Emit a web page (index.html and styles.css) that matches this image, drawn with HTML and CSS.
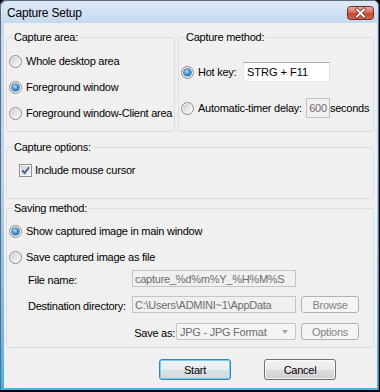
FILE: index.html
```html
<!DOCTYPE html>
<html>
<head>
<meta charset="utf-8">
<title>Capture Setup</title>
<link rel="stylesheet" href="styles.css">
</head>
<body>
<div class="window">
  <div class="titlebar">
    <span class="title">Capture Setup</span>
    <span class="close">
      <svg width="27" height="14" viewBox="0 0 27 14">
        <defs>
          <linearGradient id="cbg" x1="0" y1="0" x2="0" y2="1">
            <stop offset="0" stop-color="#eab0a4"/>
            <stop offset="0.45" stop-color="#d7705c"/>
            <stop offset="0.55" stop-color="#c9462e"/>
            <stop offset="1" stop-color="#d3684f"/>
          </linearGradient>
        </defs>
        <rect x="0.5" y="0.5" width="26" height="13" rx="3" fill="url(#cbg)" stroke="#6f2d22"/>
        <path d="M10 3.5 L17 10.5 M17 3.5 L10 10.5" stroke="#7a3a2f" stroke-width="3.4" stroke-linecap="square"/>
        <path d="M10 3.5 L17 10.5 M17 3.5 L10 10.5" stroke="#ffffff" stroke-width="1.8" stroke-linecap="square"/>
      </svg>
    </span>
  </div>
  <div class="frame">
    <div class="client">
      <div class="top-row">
        <fieldset class="group area">
          <legend>Capture area:</legend>
          <div class="body">
            <div class="opt"><span class="radio"></span><span>Whole desktop area</span></div>
            <div class="opt"><span class="radio"><span class="dot"></span></span><span>Foreground window</span></div>
            <div class="opt"><span class="radio"></span><span>Foreground window-Client area</span></div>
          </div>
        </fieldset>
        <fieldset class="group method">
          <legend>Capture method:</legend>
          <div class="body">
            <div class="opt hot"><span class="radio"><span class="dot"></span></span><span class="lbl-hot">Hot key:</span><span class="edit hotkey">STRG + F11</span></div>
            <div class="opt timer"><span class="radio"></span><span class="lbl-timer">Automatic-timer delay:</span><span class="edit dis delay">600</span><span>seconds</span></div>
          </div>
        </fieldset>
      </div>

      <fieldset class="group options">
        <legend>Capture options:</legend>
        <div class="body">
          <div class="check-row">
            <svg class="checkbox" width="13" height="13" viewBox="0 0 13 13">
              <defs>
                <linearGradient id="chk" x1="0" y1="0" x2="1" y2="1">
                  <stop offset="0" stop-color="#c9cdd2"/>
                  <stop offset="1" stop-color="#f3f4f6"/>
                </linearGradient>
              </defs>
              <rect x="0.5" y="0.5" width="12" height="12" fill="#f6f6f6" stroke="#8e8f8f"/>
              <rect x="2" y="2" width="9" height="9" fill="url(#chk)"/>
              <path d="M3.3 6.4 L5.6 9 L10.2 3.2" fill="none" stroke="#3f5f99" stroke-width="1.8"/>
            </svg>
            <span>Include mouse cursor</span>
          </div>
        </div>
      </fieldset>

      <fieldset class="group saving">
        <legend>Saving method:</legend>
        <div class="body">
          <div class="opt"><span class="radio"><span class="dot"></span></span><span>Show captured image in main window</span></div>
          <div class="opt"><span class="radio"></span><span>Save captured image as file</span></div>
          <div class="fields">
            <div class="frow">
              <span class="flabel">File name:</span>
              <span class="edit dis field">capture_%d%m%Y_%H%M%S</span>
            </div>
            <div class="frow dir">
              <span class="flabel">Destination directory:</span>
              <span class="edit dis field">C:\Users\ADMINI~1\AppData</span>
              <span class="fbtn">Browse</span>
            </div>
            <div class="frow save">
              <span class="flabel"></span>
              <span class="saveas">
                <span class="saveas-lbl">Save as:</span>
                <span class="select"><span>JPG - JPG Format</span><span class="arrow"></span></span>
              </span>
              <span class="fbtn">Options</span>
            </div>
          </div>
        </div>
      </fieldset>

      <div class="buttons">
        <span class="btn default">Start</span>
        <span class="btn">Cancel</span>
      </div>
    </div>
  </div>
</div>
</body>
</html>
```

FILE: styles.css
```css
html, body {
  margin: 0;
  padding: 0;
}
body {
  background: #000;
  width: 380px;
  height: 392px;
  overflow: hidden;
  font-family: "Liberation Sans", Arial, sans-serif;
  font-size: 11px;
  letter-spacing: -0.25px;
  color: #000;
}
.window {
  width: 379px;
  height: 390px;
  display: flex;
  flex-direction: column;
  border-radius: 6px 6px 0 0;
  background: linear-gradient(#dfeaf7 0, #c7d9ef 22px, #bad1eb 45%, #74b6e2 85%, #3fb6e9 100%);
  box-shadow: inset 1px 1px 0 #5d6c7e, inset -1px 0 0 #4a7ea6;
  overflow: hidden;
}
.titlebar {
  height: 23px;
  box-sizing: border-box;
  padding: 2px 5px 0 7px;
  display: flex;
  align-items: center;
  justify-content: space-between;
  flex: none;
}
.title {
  font-size: 12px;
  letter-spacing: -0.2px;
  color: #000;
}
.close {
  display: flex;
  width: 27px;
  height: 14px;
  margin-top: 1px;
}
.frame {
  flex: 1;
  display: flex;
  padding: 0 2px 2px 4px;
}
.client {
  flex: 1;
  background: #f0f0f0;
  padding: 8px 3px 8px 2px;
  display: flex;
  flex-direction: column;
}
.top-row {
  display: flex;
  gap: 3px;
}
.group {
  margin: 0;
  padding: 0;
  border: 1px solid #d5dfe5;
  border-radius: 3px;
  min-width: 0;
  box-sizing: border-box;
}
.group legend {
  margin-left: 6px;
  padding: 0 1px;
  line-height: 13px;
}
.area {
  width: 169px;
  flex: none;
}
.method {
  flex: 1;
}
.area .body {
  padding: 4px 0 5px 2px;
}
.opt {
  display: flex;
  align-items: center;
  height: 26px;
  line-height: 13px;
  white-space: nowrap;
}
.radio {
  width: 13px;
  height: 13px;
  box-sizing: border-box;
  border-radius: 50%;
  border: 1px solid #8c8c8c;
  background: linear-gradient(135deg, #c4c4c4 0, #e6e6e6 50%, #fbfbfb 100%);
  box-shadow: inset 0 0 0 1px #f3f3f3;
  display: flex;
  align-items: center;
  justify-content: center;
  flex: none;
  margin-right: 4px;
}
.dot {
  width: 7px;
  height: 7px;
  border-radius: 50%;
  background: radial-gradient(circle at 40% 35%, #b4e2ff 0, #3d94dc 45%, #14528c 100%);
  box-shadow: 0 0 0 0.6px #1b4570;
}
.method .body {
  padding: 18px 0 0 2px;
}
.opt.hot {
  height: 20px;
}
.opt.timer {
  height: 20px;
  margin-top: 16px;
}
.lbl-hot {
  width: 45px;
  flex: none;
}
.lbl-timer {
  width: 108px;
  flex: none;
}
.edit {
  height: 20px;
  box-sizing: border-box;
  border: 1px solid;
  border-color: #abadb3 #dbdfe6 #e3e9ef #e2e3ea;
  background: #fff;
  padding: 0 3px;
  display: flex;
  align-items: center;
  white-space: nowrap;
  overflow: hidden;
  flex: none;
}
.edit.dis {
  background: #f0f0f0;
  border-color: #c4c4c4;
  color: #6d6d6d;
}
.hotkey {
  width: 87px;
  letter-spacing: 0;
}
.delay {
  width: 24px;
  padding: 0;
  justify-content: center;
}
.options {
  margin-top: 9px;
}
.options .body {
  padding: 8px 0 20px 12px;
}
.check-row {
  display: flex;
  align-items: center;
  height: 16px;
}
.checkbox {
  flex: none;
  margin-right: 3px;
}
.saving {
  margin-top: 3px;
}
.saving .body {
  padding: 3px 0 7px 2px;
}
.fields {
  margin-left: 19px;
}
.frow {
  display: flex;
  height: 17px;
}
.frow.dir {
  margin-top: 9px;
}
.frow.save {
  margin-top: 10px;
}
.flabel {
  width: 104px;
  flex: none;
  display: flex;
  align-items: center;
  padding-top: 2px;
  box-sizing: border-box;
  white-space: nowrap;
}
.field {
  width: 164px;
  height: 17px;
  padding: 0 2px;
}
.fbtn {
  width: 58px;
  height: 17px;
  margin-left: 5px;
  box-sizing: border-box;
  border: 1px solid #adb2b5;
  border-radius: 3px;
  background: #f4f4f4;
  color: #838383;
  display: flex;
  align-items: center;
  justify-content: center;
  flex: none;
}
.saveas {
  width: 164px;
  flex: none;
  display: flex;
  justify-content: flex-end;
  align-items: center;
}
.saveas-lbl {
  margin-right: 1px;
  padding-top: 2px;
}
.select {
  width: 120px;
  height: 17px;
  box-sizing: border-box;
  border: 1px solid #c4c4c4;
  border-radius: 2px;
  background: #f4f4f4;
  color: #6d6d6d;
  display: flex;
  align-items: center;
  justify-content: space-between;
  padding: 0 7px 0 3px;
  white-space: nowrap;
}
.arrow {
  width: 0;
  height: 0;
  border-left: 3.5px solid transparent;
  border-right: 3.5px solid transparent;
  border-top: 4px solid #a6a6a6;
}
.buttons {
  display: flex;
  justify-content: flex-end;
  gap: 33px;
  margin-top: 11px;
  margin-right: 38px;
}
.btn {
  width: 72px;
  height: 21px;
  box-sizing: border-box;
  border: 1px solid #707070;
  border-radius: 3px;
  background: linear-gradient(#f2f2f2 0, #ebebeb 50%, #dddddd 50%, #cfcfcf 100%);
  box-shadow: inset 0 0 0 1px rgba(255, 255, 255, 0.75);
  display: flex;
  align-items: center;
  justify-content: center;
}
.btn.default {
  border-color: #3c7fb1;
  box-shadow: inset 0 0 0 1px #6fd3f7;
  background: linear-gradient(#f2f4f5 0, #eaeef0 50%, #dae2e6 50%, #cfd9de 100%);
}
```
